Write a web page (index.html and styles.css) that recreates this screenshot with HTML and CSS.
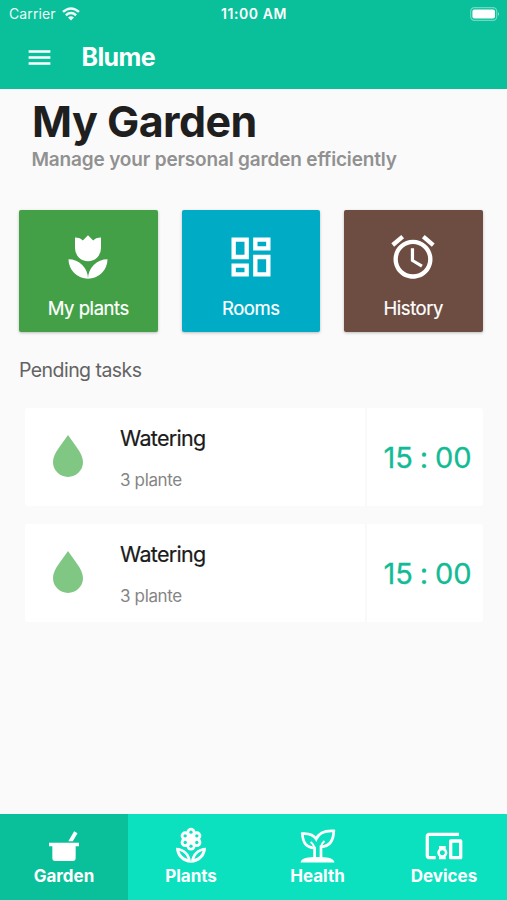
FILE: index.html
```html
<!DOCTYPE html>
<html lang="en">
<head>
<meta charset="utf-8">
<title>Blume</title>
<link rel="stylesheet" href="styles.css">
</head>
<body>
<div class="app">
  <header class="header">
    <div class="status">
      <div class="carrier"><span>Carrier</span>
        <svg width="18" height="14" viewBox="0 0 18 14" fill="none" stroke="#fff" stroke-width="2.5"><path d="M1 4.9Q9-2 17 4.9M3.9 8.2q5.1-4.3 10.2 0"/><path d="M9 13.5 6 10.5q3-2.5 6 0z" fill="#fff" stroke="none"/></svg>
      </div>
      <div class="clock">11:00 AM</div>
      <svg class="battery" width="30" height="14" viewBox="0 0 30 14"><rect x=".7" y=".7" width="26" height="12.6" rx="3.6" fill="none" stroke="#fff" stroke-opacity=".4" stroke-width="1.2"/><rect x="2.4" y="2.4" width="22.6" height="9.2" rx="2" fill="#fff"/><path d="M28 5q2 2 0 4z" fill="#fff" fill-opacity=".5"/></svg>
    </div>
    <div class="bar">
      <svg width="29" height="29" viewBox="0 0 24 24" fill="#fff"><path d="M3 18h18v-2H3v2zm0-5h18v-2H3v2zm0-7v2h18V6H3z"/></svg>
      <span class="brand">Blume</span>
    </div>
  </header>
  <main class="main">
    <h1 class="title">My Garden</h1>
    <p class="subtitle">Manage your personal garden efficiently</p>
    <div class="tiles">
      <a class="tile green">
        <svg width="52" height="52" viewBox="0 0 24 24"><path d="M3 13A9 9 0 0 0 12 22A9 9 0 0 0 3 13M12 22A9 9 0 0 0 21 13A9 9 0 0 0 12 22M18 3V8A6 6 0 0 1 12 14A6 6 0 0 1 6 8V3C6.74 3 7.47 3.12 8.16 3.39C8.71 3.62 9.2 3.96 9.61 4.39L12 2L14.39 4.39C14.8 3.96 15.29 3.62 15.84 3.39C16.53 3.12 17.26 3 18 3Z"/></svg>
        <span>My plants</span>
      </a>
      <a class="tile cyan">
        <svg width="52" height="52" viewBox="0 0 24 24"><path d="M19 5v2h-4V5h4M9 5v6H5V5h4m10 8v6h-4v-6h4M9 17v2H5v-2h4M21 3h-8v6h8V3zM11 3H3v10h8V3zm10 8h-8v10h8V11zm-10 4H3v6h8v-6z"/></svg>
        <span>Rooms</span>
      </a>
      <a class="tile brown">
        <svg width="52" height="52" viewBox="0 0 24 24"><path d="M22 5.72l-4.6-3.86-1.29 1.53 4.6 3.86L22 5.72zM7.88 3.39L6.6 1.86 2 5.71l1.29 1.53 4.59-3.85zM12.5 8H11v6l4.75 2.85.75-1.23-4-2.37V8zM12 4c-4.97 0-9 4.03-9 9s4.02 9 9 9c4.97 0 9-4.03 9-9s-4.03-9-9-9zm0 16c-3.87 0-7-3.13-7-7s3.13-7 7-7 7 3.13 7 7-3.13 7-7 7z"/></svg>
        <span>History</span>
      </a>
    </div>
    <h2 class="section">Pending tasks</h2>
    <div class="tasks">
      <div class="task">
        <div class="drop"><svg width="30" height="42" viewBox="0 0 30 42"><path d="M15 0C10 8 0 18 0 27a15 15 0 0 0 30 0C30 18 20 8 15 0z"/></svg></div>
        <div class="info"><div class="name">Watering</div><div class="count">3 plante</div></div>
        <div class="time"><span>15</span><span>:</span><span>00</span></div>
      </div>
      <div class="task">
        <div class="drop"><svg width="30" height="42" viewBox="0 0 30 42"><path d="M15 0C10 8 0 18 0 27a15 15 0 0 0 30 0C30 18 20 8 15 0z"/></svg></div>
        <div class="info"><div class="name">Watering</div><div class="count">3 plante</div></div>
        <div class="time"><span>15</span><span>:</span><span>00</span></div>
      </div>
    </div>
  </main>
  <nav class="nav">
    <a class="tab active">
      <svg width="40" height="40" viewBox="0 0 24 24"><path d="M3 10h18v2.2h-2V19.4c0 1-.6 1.6-1.6 1.6H6.6c-1 0-1.6-.6-1.6-1.6v-7.2H3zM14.6 9.2l3.5-6 2 1.2L17.3 9.2z"/></svg>
      <span>Garden</span>
    </a>
    <a class="tab">
      <svg width="40" height="40" viewBox="0 0 24 24">
        <path d="M12 22c4.97 0 9-4.03 9-9-4.97 0-9 4.03-9 9zm2-2.2c.8-2.7 2.4-4.2 5-5-.8 2.6-2.4 4.2-5 5zM3 13c0 4.97 4.03 9 9 9 0-4.97-4.03-9-9-9zm2 1.8c2.6.8 4.2 2.3 5 5-2.6-.8-4.2-2.4-5-5z"/>
        <circle cx="12" cy="7.9" r="4"/>
        <circle cx="12" cy="3.8" r="2.7"/><circle cx="8.5" cy="5.9" r="2.7"/><circle cx="15.5" cy="5.9" r="2.7"/><circle cx="8.5" cy="9.9" r="2.7"/><circle cx="15.5" cy="9.9" r="2.7"/><circle cx="12" cy="12" r="2.7"/>
        <g fill="#0ce1bf"><circle cx="12" cy="3.7" r="1"/><circle cx="8.5" cy="5.9" r="1"/><circle cx="15.5" cy="5.9" r="1"/><circle cx="8.5" cy="9.9" r="1"/><circle cx="15.5" cy="9.9" r="1"/><circle cx="12" cy="12.1" r="1"/></g>
      </svg>
      <span>Plants</span>
    </a>
    <a class="tab">
      <svg class="outline" width="40" height="40" viewBox="1 0 40 40"><path d="M17.6 32V22C9 21.5 6 17 5.3 7.7 12.500 7.200 17 9.500 19.200 13 21.500 7.500 28 4.400 36.800 4.900 36.500 14.500 32.500 20.500 24 20.800V32"/><path class="vein" d="M17.6 24q0-5-4-8M24 23q-.5-4.500 3.500-8"/><path class="soil" d="M3.500 36.500C4 32 11 31 20.500 31s16.500 1 17 5.500z"/></svg>
      <span>Health</span>
    </a>
    <a class="tab">
      <svg width="40" height="40" viewBox="0 0 24 24"><path d="M3 6h18V4H3c-1.1 0-2 .9-2 2v12c0 1.1.9 2 2 2h4v-2H3V6zm10 6H9v1.78c-.61.55-1 1.33-1 2.22s.39 1.67 1 2.22V20h4v-1.78c.61-.55 1-1.34 1-2.22s-.39-1.67-1-2.22V12zm-2 5.5c-.83 0-1.5-.67-1.5-1.5s.67-1.5 1.5-1.5 1.5.67 1.5 1.5-.67 1.5-1.5 1.5zM22 8h-6c-.5 0-1 .5-1 1v10c0 .5.5 1 1 1h6c.5 0 1-.5 1-1V9c0-.5-.5-1-1-1zm-1 10h-4v-8h4v8z"/></svg>
      <span>Devices</span>
    </a>
  </nav>
</div>
</body>
</html>
```
FILE: styles.css
```css
* { box-sizing: border-box; margin: 0; }
body { font-family: Inter, "Liberation Sans", sans-serif; background: #fafafa; }
svg { display: block; flex: none; }
.app { display: flex; flex-direction: column; height: 900px; width: 507px; overflow: hidden; }
.header { height: 88.5px; background: #0ac09a; color: #fff; flex: none; }
.status { display: grid; grid-template-columns: 1fr auto 1fr; align-items: center; height: 27px; padding: 0 7px 0 9px; font-size: 14px; line-height: 20px; }
.carrier { display: flex; align-items: center; gap: 6px; opacity: .93; letter-spacing: .1px; }
.clock { font-weight: 600; letter-spacing: .6px; margin-left: -1px; }
.battery { justify-self: end; }
.bar { display: flex; align-items: center; height: 60px; padding-left: 25px; gap: 27.5px; }
.brand { font-size: 25px; font-weight: 700; letter-spacing: -.6px; }
.main { flex: 1; padding: 0 24.5px 0 19px; }
.title { font-size: 43px; line-height: 52px; font-weight: 700; letter-spacing: -.55px; padding: 6px 0 0 13px; color: #1f1f1f; white-space: nowrap; }
.subtitle { font-size: 19px; line-height: 24px; font-weight: 600; color: #919191; padding-left: 12.5px; margin-top: 1px; white-space: nowrap; letter-spacing: -.17px; }
.tiles { display: grid; grid-template-columns: repeat(3, 1fr); gap: 24px; margin-top: 38px; }
.tile { height: 122px; border-radius: 2px; display: flex; flex-direction: column; align-items: center; padding-top: 21px; color: #fff; font-size: 18.5px; line-height: 24px; letter-spacing: -.45px; box-shadow: 0 1px 3px rgba(0,0,0,.25); -webkit-text-stroke: .2px #fff; }
.tile svg, .tab svg { fill: #fff; }
.tile span { margin-top: 13px; }
.green { background: #43a047; }
.cyan { background: #00acc5; }
.brown { background: #6d4c41; }
.section { font-size: 19.5px; line-height: 24px; font-weight: 400; color: #636363; margin-top: 26px; letter-spacing: -.55px; }
.tasks { display: grid; gap: 18px; margin: 26px 0 0 6px; width: 458px; }
.task { display: flex; height: 98px; background: #fff; border-radius: 3px; }
.drop { width: 86px; padding-top: 27px; display: flex; justify-content: center; }
.drop svg { fill: #81c784; }
.info { flex: 1; padding: 16px 0 0 9px; }
.name { font-size: 21.5px; line-height: 28px; color: #1b1b1b; letter-spacing: -.7px; -webkit-text-stroke: .2px #1b1b1b; }
.count { font-size: 17px; line-height: 22px; color: #858585; margin-top: 17px; letter-spacing: -.35px; }
.time { width: 118px; border-left: 2px solid #f9f9f9; display: flex; align-items: center; justify-content: center; gap: 7px; padding: 1px 0 0 5px; font-size: 29px; letter-spacing: -.1px; color: #12bb95; -webkit-text-stroke: .3px #12bb95; }
.nav { height: 86px; display: grid; grid-template-columns: 128px 126px 127px 126px; background: #0ce1bf; flex: none; }
.tab { display: flex; flex-direction: column; align-items: center; padding-top: 12px; color: #fff; font-size: 17px; font-weight: 700; line-height: 22px; }
.tab span { margin-top: -1px; }
.tab.active { background: #0ac09a; }
.tab .outline { fill: none; stroke: #fff; stroke-width: 2.7; }
.outline .vein { stroke-width: 1.9; }
.outline .soil { fill: #fff; stroke: none; }
```
